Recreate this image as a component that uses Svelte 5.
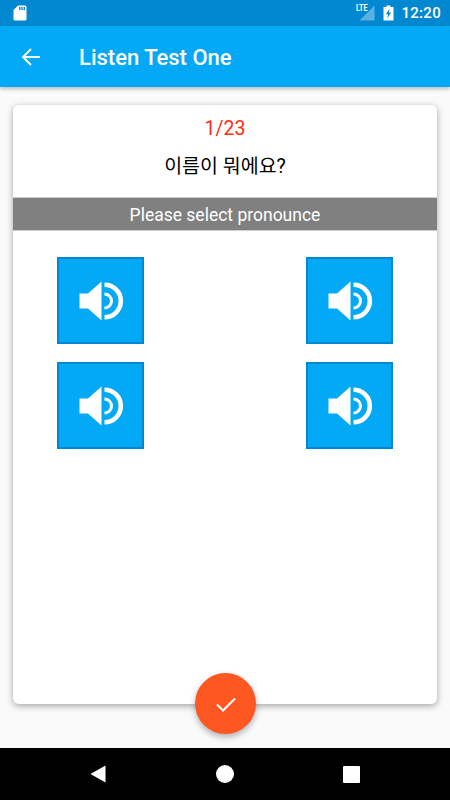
<script lang="ts">
  const options = [1, 2, 3, 4];
</script>

<div class="screen">
  <div class="status-bar">
    <svg class="sd-icon" width="14" height="16" viewBox="0 0 14 16">
      <path d="M5 0.5H12A1.5 1.5 0 0 1 13.5 2V14A1.5 1.5 0 0 1 12 15.5H2A1.5 1.5 0 0 1 0.5 14V5Z" fill="#fff" />
      <path d="M6 2h1.4v3H6zM8.3 2h1.4v3H8.3zM10.6 2H12v3h-1.4z" fill="#0288d1" />
    </svg>
    <span class="spacer"></span>
    <span class="lte">LTE</span>
    <svg class="signal" width="16" height="16" viewBox="0 0 16 16">
      <path d="M15.5 0.5V15.5H0.5Z" fill="#fff" fill-opacity="0.35" />
    </svg>
    <svg class="battery" width="11" height="16" viewBox="0 0 11 16">
      <path d="M3.5 0.5H7.5V2H10.5V15.5H0.5V2H3.5Z" fill="#fff" />
      <path d="M6.6 3.5L3 9.3H5L4.4 13.6L8 7.4H5.9Z" fill="#0288d1" />
    </svg>
    <span class="clock">12:20</span>
  </div>

  <header class="app-bar">
    <svg class="back" width="20" height="20" viewBox="0 0 20 20" fill="none" stroke="#fff" stroke-width="1.8">
      <path d="M19 10H2.5M10 2L2 10l8 8" />
    </svg>
    <h1>Listen Test One</h1>
  </header>

  <main class="body">
    <section class="card">
      <div class="counter">1/23</div>
      <div class="question">이름이 뭐에요?</div>
      <div class="prompt">Please select pronounce</div>
      <div class="options">
        {#each options as option (option)}
          <button class="sound" aria-label="Play option {option}">
            <svg width="48" height="48" viewBox="0 0 48 48" fill="none">
              <path d="M2.5 16.5H11L24.5 4.5V43.5L11 31.5H2.5Z" fill="#fff" />
              <path d="M27.5 7.7A16.3 16.3 0 0 1 27.5 40.3" stroke="#fff" stroke-width="4.6" />
              <path d="M27.5 17A7 7 0 0 1 27.5 31" stroke="#fff" stroke-width="3" />
            </svg>
          </button>
        {/each}
      </div>
    </section>
  </main>

  <button class="fab" aria-label="Submit">
    <svg width="22" height="22" viewBox="0 0 22 22" fill="none" stroke="#fff" stroke-width="2">
      <path d="M2 11.5L8 17.5L20 5.5" />
    </svg>
  </button>

  <nav class="nav-bar">
    <svg width="16" height="18" viewBox="0 0 16 18"><path d="M0.5 9L15.5 0.5V17.5Z" fill="#fff" /></svg>
    <span class="home"></span>
    <span class="recents"></span>
  </nav>
</div>

<style>
  :global(body) {
    margin: 0;
  }
  .screen {
    position: relative;
    width: 450px;
    height: 800px;
    display: flex;
    flex-direction: column;
    background: #fafafa;
    font-family: Roboto, "Noto Sans CJK KR", sans-serif;
    overflow: hidden;
  }
  .status-bar {
    flex: 0 0 26px;
    display: flex;
    align-items: center;
    padding: 0 9px 0 13px;
    background: #0288d1;
    color: #fff;
  }
  .spacer {
    flex: 1;
  }
  .lte {
    position: relative;
    z-index: 1;
    align-self: flex-start;
    margin: 4px -8px 0 0;
    font-size: 9px;
    font-weight: 700;
    line-height: 9px;
    transform: scaleX(0.8);
    transform-origin: right;
  }
  .battery {
    margin-left: 8px;
  }
  .clock {
    margin-left: 7px;
    font-size: 15px;
    font-weight: 500;
    letter-spacing: 0.3px;
  }
  .app-bar {
    position: relative;
    z-index: 1;
    flex: 0 0 61px;
    display: flex;
    align-items: center;
    padding-left: 21px;
    background: #03a9f4;
    box-shadow: 0 2px 4px rgba(0, 0, 0, 0.25);
  }
  h1 {
    margin: 1px 0 0 38px;
    color: #fff;
    font-size: 22px;
    font-weight: 500;
  }
  .body {
    flex: 1;
    padding: 18px 13px 44px;
    min-height: 0;
  }
  .card {
    height: 100%;
    background: #fff;
    border-radius: 6px;
    box-shadow: 0 2px 7px rgba(0, 0, 0, 0.35);
    overflow: hidden;
  }
  .counter {
    padding-top: 12px;
    color: #ff2d12;
    font-size: 19.5px;
    line-height: 24px;
    text-align: center;
  }
  .question {
    margin-top: 14px;
    color: #000;
    font-size: 19.5px;
    line-height: 24px;
    text-align: center;
  }
  .prompt {
    margin-top: 18px;
    height: 32px;
    border-top: 1px solid #ccc;
    border-bottom: 1px solid #ccc;
    background: #808080;
    color: #fff;
    font-size: 17.5px;
    line-height: 34px;
    text-align: center;
  }
  .options {
    display: grid;
    grid-template-columns: 87px 87px;
    justify-content: space-between;
    gap: 18px 0;
    padding: 26px 44px 0;
  }
  .sound {
    width: 87px;
    height: 87px;
    box-sizing: border-box;
    display: flex;
    align-items: center;
    justify-content: center;
    padding: 0;
    background: #03a9f4;
    border: 2px solid #0288d1;
  }
  .fab {
    position: absolute;
    left: 195px;
    top: 673px;
    width: 61px;
    height: 61px;
    display: flex;
    align-items: center;
    justify-content: center;
    padding: 0;
    border: none;
    border-radius: 50%;
    background: #ff5722;
    box-shadow: 0 3px 6px rgba(0, 0, 0, 0.3);
  }
  .nav-bar {
    flex: 0 0 52px;
    display: flex;
    align-items: center;
    justify-content: space-between;
    padding: 0 90px;
    background: #000;
  }
  .home {
    width: 18px;
    height: 18px;
    border-radius: 50%;
    background: #fff;
  }
  .recents {
    width: 17px;
    height: 17px;
    border-radius: 1px;
    background: #fff;
  }
</style>
